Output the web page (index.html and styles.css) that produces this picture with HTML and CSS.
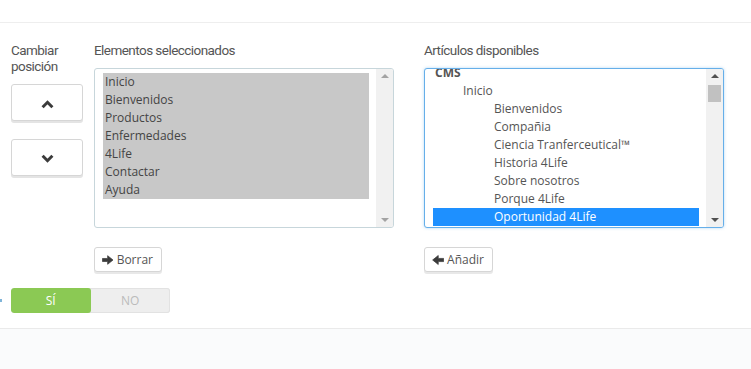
FILE: index.html
```html
<!DOCTYPE html>
<html lang="es">
<head>
<meta charset="utf-8">
<title>Menú</title>
<link rel="stylesheet" href="styles.css">
</head>
<body>
<div class="topbar"></div>
<div class="panel">
  <div class="row">
    <div class="col col-move">
      <div class="label">Cambiar<br>posición</div>
      <button class="btn-move btn-up" type="button">
        <svg width="13" height="9" viewBox="0 0 13 9"><polyline points="1.6,7.2 6.5,2.3 11.4,7.2" fill="none" stroke="#3b3b3b" stroke-width="3" stroke-linecap="butt" stroke-linejoin="miter"/></svg>
      </button>
      <button class="btn-move btn-down" type="button">
        <svg width="13" height="9" viewBox="0 0 13 9"><polyline points="1.6,1.8 6.5,6.7 11.4,1.8" fill="none" stroke="#3b3b3b" stroke-width="3" stroke-linecap="butt" stroke-linejoin="miter"/></svg>
      </button>
    </div>
    <div class="col col-list">
      <div class="label">Elementos seleccionados</div>
      <div class="selbox">
        <div class="opts opts-left">
          <div class="opt sel-gray">Inicio</div>
          <div class="opt sel-gray">Bienvenidos</div>
          <div class="opt sel-gray">Productos</div>
          <div class="opt sel-gray">Enfermedades</div>
          <div class="opt sel-gray">4Life</div>
          <div class="opt sel-gray">Contactar</div>
          <div class="opt sel-gray">Ayuda</div>
        </div>
        <div class="sbar sbar-light">
          <span class="arr arr-up"></span>
          <span class="track"></span>
          <span class="arr arr-down"></span>
        </div>
      </div>
      <button class="btn-act" type="button">
        <svg width="13" height="12" viewBox="0 0 13 12"><path d="M0.5 4.3H6.3V1.2L12.3 6L6.3 10.8V7.7H0.5Z" fill="#3b3b3b" stroke="#3b3b3b" stroke-width="0.8" stroke-linejoin="round"/></svg>
        <span>Borrar</span>
      </button>
    </div>
    <div class="col col-list col-avail">
      <div class="label">Artículos disponibles</div>
      <div class="selbox focus">
        <div class="opts opts-right">
          <div class="scroll">
            <div class="opt group">CMS</div>
            <div class="opt lvl1">Inicio</div>
            <div class="opt lvl2">Bienvenidos</div>
            <div class="opt lvl2">Compañia</div>
            <div class="opt lvl2">Ciencia Tranferceutical™</div>
            <div class="opt lvl2">Historia 4Life</div>
            <div class="opt lvl2">Sobre nosotros</div>
            <div class="opt lvl2">Porque 4Life</div>
            <div class="opt lvl2 sel-blue">Oportunidad 4Life</div>
          </div>
        </div>
        <div class="sbar">
          <span class="arr arr-up dark"></span>
          <span class="track"><span class="thumb"></span></span>
          <span class="arr arr-down dark"></span>
        </div>
      </div>
      <button class="btn-act btn-add" type="button">
        <svg width="13" height="12" viewBox="0 0 13 12"><path d="M12.5 4.3H6.7V1.2L0.7 6L6.7 10.8V7.7H12.5Z" fill="#3b3b3b" stroke="#3b3b3b" stroke-width="0.8" stroke-linejoin="round"/></svg>
        <span>Añadir</span>
      </button>
    </div>
  </div>
  <div class="toggle-row">
    <span class="edge-mark"></span>
    <div class="toggle">
      <span class="tg tg-on">SÍ</span>
      <span class="tg tg-off">NO</span>
    </div>
  </div>
</div>
<div class="footer"></div>
</body>
</html>
```

FILE: styles.css
```css
* { box-sizing: border-box; }
html, body { margin: 0; padding: 0; }
body {
  width: 751px;
  height: 369px;
  overflow: hidden;
  background: #fafbfc;
  font-family: "Open Sans", "DejaVu Sans", sans-serif;
  color: #555;
}
.topbar {
  height: 23px;
  background: #fff;
  border-bottom: 1px solid #eeeeee;
}
.panel {
  background: #fff;
  height: 306px;
  border-bottom: 1px solid #eaeaea;
  padding: 19px 0 0 11px;
}
.row {
  display: flex;
  align-items: flex-start;
}
.col { display: flex; flex-direction: column; align-items: flex-start; }
.col-move { width: 72px; margin-right: 11px; }
.col-list { width: 300px; }
.col-avail { margin-left: 30px; }
.label {
  font-family: "Roboto", "DejaVu Sans", sans-serif;
  font-size: 13.5px;
  letter-spacing: -0.55px;
  line-height: 16px;
  color: #555;
  margin-bottom: 10px;
  white-space: nowrap;
}
.btn-move {
  width: 72px;
  height: 37px;
  background: #fff;
  border: 1px solid #d6d6d6;
  border-radius: 3px;
  box-shadow: 0 2px 0 #e4e4e4;
  display: flex;
  align-items: center;
  justify-content: center;
  padding: 4px 0 0 0;
  margin: 0;
}
.btn-down { margin-top: 18px; padding-top: 2px; }
.selbox {
  width: 300px;
  height: 160px;
  border: 1px solid #c7d6db;
  border-radius: 3px;
  background: #fff;
  display: flex;
  overflow: hidden;
}
.selbox.focus {
  border-color: #66afe9;
  box-shadow: 0 0 3px rgba(102, 175, 233, 0.5);
}
.opts {
  flex: 1;
  padding: 4px 7px 0 8px;
  overflow: hidden;
  font-size: 12px;
}
.opts-right { padding-top: 0; }
.scroll { margin-top: -5px; }
.opt {
  height: 18px;
  line-height: 18px;
  padding-left: 2px;
  white-space: nowrap;
  color: #555;
}
.sel-gray { background: #c8c8c8; color: #444; }
.group { font-weight: bold; color: #555; }
.lvl1 { padding-left: 30px; }
.lvl2 { padding-left: 61px; }
.sel-blue { background: #1e90ff; color: #fff; }
.sbar {
  width: 17px;
  background: #f1f1f1;
  display: flex;
  flex-direction: column;
  align-items: center;
}
.arr {
  width: 0; height: 0;
  border-left: 4px solid transparent;
  border-right: 4px solid transparent;
  margin: 5px 0;
}
.arr-up { border-bottom: 4px solid #a3a3a3; }
.arr-down { border-top: 4px solid #a3a3a3; }
.arr-up.dark { border-bottom-color: #505050; }
.arr-down.dark { border-top-color: #505050; }
.track { flex: 1; width: 100%; display: flex; justify-content: center; padding-top: 2px; }
.thumb { width: 13px; height: 17px; background: #c1c1c1; }
.btn-act {
  margin-top: 19px;
  height: 25px;
  padding: 0 8px 0 7px;
  background: #fff;
  border: 1px solid #d6d6d6;
  border-radius: 3px;
  box-shadow: 0 2px 0 #e8e8e8;
  display: flex;
  align-items: center;
  gap: 3px;
  font-family: "Open Sans", sans-serif;
  font-size: 12px;
  color: #555;
  width: 68px;
}
.btn-add { width: 69px; }
.toggle-row {
  margin-top: 16px;
  position: relative;
}
.edge-mark {
  position: absolute;
  left: -11px;
  top: 11px;
  width: 2px;
  height: 3px;
  background: #7fb4d8;
}
.toggle {
  display: flex;
  width: 159px;
  height: 25px;
  border-radius: 3px;
  overflow: hidden;
  background: #eeeeee;
  box-shadow: inset 0 0 0 1px #e2e2e2;
}
.tg {
  flex: 1;
  display: flex;
  align-items: center;
  justify-content: center;
  font-family: "Open Sans", sans-serif;
  font-size: 12px;
}
.tg-on { background: #8bc954; color: #fff; border-radius: 3px; }
.tg-off { color: #bbbbbb; }
.footer { height: 40px; background: #fafbfc; }
```
